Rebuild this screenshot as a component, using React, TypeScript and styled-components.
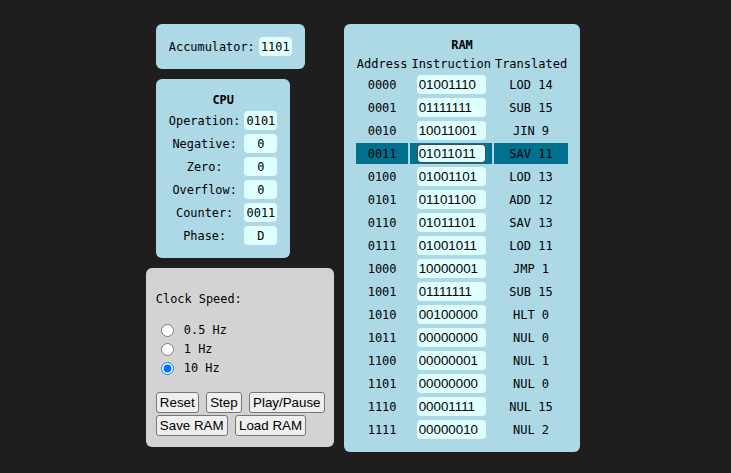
import React from 'react';
import styled, { createGlobalStyle } from 'styled-components';

const GlobalStyle = createGlobalStyle`
  html, body { margin: 0; padding: 0; background: #1e1e1e; }
  body {
    font-family: "DejaVu Sans Mono", "Liberation Mono", monospace;
    font-size: 11.9px;
    color: #000;
  }
`;

const Page = styled.div`
  display: flex;
  justify-content: center;
  align-items: flex-start;
  gap: 10px;
  padding: 24px 5px 0 0;
  min-height: 473px;
  box-sizing: border-box;
`;

const LeftColumn = styled.div`
  display: flex;
  flex-direction: column;
  align-items: flex-start;
  gap: 10px;
`;

const Panel = styled.div<{ $indent?: boolean }>`
  background: #add8e6;
  border-radius: 6px;
  padding: 10px;
  margin-left: ${(p) => (p.$indent ? '10px' : '0')};
`;

const ClockPanel = styled.div`
  background: #d3d3d3;
  border-radius: 6px;
  width: 168px;
  padding: 10px 10px 11px;
`;

const Grid = styled.table<{ $wide?: boolean }>`
  border-collapse: separate;
  border-spacing: 2px;
  font: inherit;
  font-size: ${(p) => (p.$wide ? '12px' : '11.9px')};
`;

const Title = styled.th`
  font-weight: bold;
  padding: 2px 1px 0;
  line-height: 15px;
  text-align: center;
`;

const Cell = styled.td<{ $active?: boolean }>`
  padding: 2px 1px 0;
  line-height: 15px;
  text-align: center;
  white-space: nowrap;
  vertical-align: middle;
  background: ${(p) => (p.$active ? '#02708f' : 'transparent')};
`;

const FieldCell = styled.td<{ $active?: boolean }>`
  padding: 1px;
  vertical-align: middle;
  background: ${(p) => (p.$active ? '#02708f' : 'transparent')};
`;

const RegisterInput = styled.input`
  display: block;
  margin: 0 auto;
  width: 33px;
  height: 19px;
  box-sizing: border-box;
  border: none;
  border-radius: 4px;
  background: #e0ffff;
  padding: 1px 1px 0;
  font-family: "DejaVu Sans Mono", "Liberation Mono", monospace;
  font-size: 11.9px;
  text-align: center;
  color: #000;
`;

const MemoryInput = styled.input<{ $active?: boolean }>`
  display: block;
  margin: 0 auto;
  width: 69px;
  height: 19px;
  box-sizing: border-box;
  border: ${(p) => (p.$active ? '1px solid #4a4a4a' : 'none')};
  border-radius: 4px;
  background: #e0ffff;
  padding: 0 ${(p) => (p.$active ? '1px' : '2px')};
  font-family: "Liberation Sans", Arial, sans-serif;
  font-size: 13.33px;
  text-align: left;
  color: #000;
`;

const ClockHeading = styled.p`
  margin: 14px 0 14px;
  line-height: 15px;
`;

const RadioRow = styled.label`
  display: flex;
  align-items: center;
  height: 19px;
  line-height: 15px;
`;

const Radio = styled.input`
  width: 13px;
  height: 13px;
  margin: 0 10px 0 5px;
`;

const ButtonArea = styled.div`
  margin-top: 14px;
  display: flex;
  flex-direction: column;
  gap: 2px;
`;

const ButtonRow = styled.div`
  display: flex;
  gap: 7.5px;
`;

const Button = styled.button`
  height: 21px;
  box-sizing: border-box;
  padding: 2px 3px;
  border: 1px solid #767676;
  border-radius: 3px;
  background: #efefef;
  color: #000;
  font-family: "Liberation Sans", Arial, sans-serif;
  font-size: 13.33px;
  line-height: 15px;
`;

const cpuRows: [string, string][] = [
  ['Operation:', '0101'],
  ['Negative:', '0'],
  ['Zero:', '0'],
  ['Overflow:', '0'],
  ['Counter:', '0011'],
  ['Phase:', 'D'],
];

const ram: [string, string, string][] = [
  ['0000', '01001110', 'LOD 14'],
  ['0001', '01111111', 'SUB 15'],
  ['0010', '10011001', 'JIN 9'],
  ['0011', '01011011', 'SAV 11'],
  ['0100', '01001101', 'LOD 13'],
  ['0101', '01101100', 'ADD 12'],
  ['0110', '01011101', 'SAV 13'],
  ['0111', '01001011', 'LOD 11'],
  ['1000', '10000001', 'JMP 1'],
  ['1001', '01111111', 'SUB 15'],
  ['1010', '00100000', 'HLT 0'],
  ['1011', '00000000', 'NUL 0'],
  ['1100', '00000001', 'NUL 1'],
  ['1101', '00000000', 'NUL 0'],
  ['1110', '00001111', 'NUL 15'],
  ['1111', '00000010', 'NUL 2'],
];

const ACTIVE = 3;

export default function App() {
  return (
    <>
      <GlobalStyle />
      <Page>
        <LeftColumn>
          <Panel $indent>
            <Grid>
              <tbody>
                <tr>
                  <Cell>Accumulator:</Cell>
                  <FieldCell>
                    <RegisterInput readOnly value="1101" />
                  </FieldCell>
                </tr>
              </tbody>
            </Grid>
          </Panel>
          <Panel $indent>
            <Grid>
              <tbody>
                <tr>
                  <Title colSpan={2}>CPU</Title>
                </tr>
                {cpuRows.map(([label, value]) => (
                  <tr key={label}>
                    <Cell>{label}</Cell>
                    <FieldCell>
                      <RegisterInput readOnly value={value} />
                    </FieldCell>
                  </tr>
                ))}
              </tbody>
            </Grid>
          </Panel>
          <ClockPanel>
            <ClockHeading>Clock Speed:</ClockHeading>
            <RadioRow>
              <Radio type="radio" name="clock" />
              0.5 Hz
            </RadioRow>
            <RadioRow>
              <Radio type="radio" name="clock" />
              1 Hz
            </RadioRow>
            <RadioRow>
              <Radio type="radio" name="clock" defaultChecked />
              10 Hz
            </RadioRow>
            <ButtonArea>
              <ButtonRow>
                <Button>Reset</Button>
                <Button>Step</Button>
                <Button>Play/Pause</Button>
              </ButtonRow>
              <ButtonRow>
                <Button>Save RAM</Button>
                <Button>Load RAM</Button>
              </ButtonRow>
            </ButtonArea>
          </ClockPanel>
        </LeftColumn>
        <Panel>
          <Grid $wide>
            <tbody>
              <tr>
                <Title colSpan={3}>RAM</Title>
              </tr>
              <tr>
                <Cell>Address</Cell>
                <Cell>Instruction</Cell>
                <Cell>Translated</Cell>
              </tr>
              {ram.map(([addr, bits, text], i) => (
                <tr key={addr}>
                  <Cell $active={i === ACTIVE}>{addr}</Cell>
                  <FieldCell $active={i === ACTIVE}>
                    <MemoryInput readOnly value={bits} $active={i === ACTIVE} />
                  </FieldCell>
                  <Cell $active={i === ACTIVE}>{text}</Cell>
                </tr>
              ))}
            </tbody>
          </Grid>
        </Panel>
      </Page>
    </>
  );
}
